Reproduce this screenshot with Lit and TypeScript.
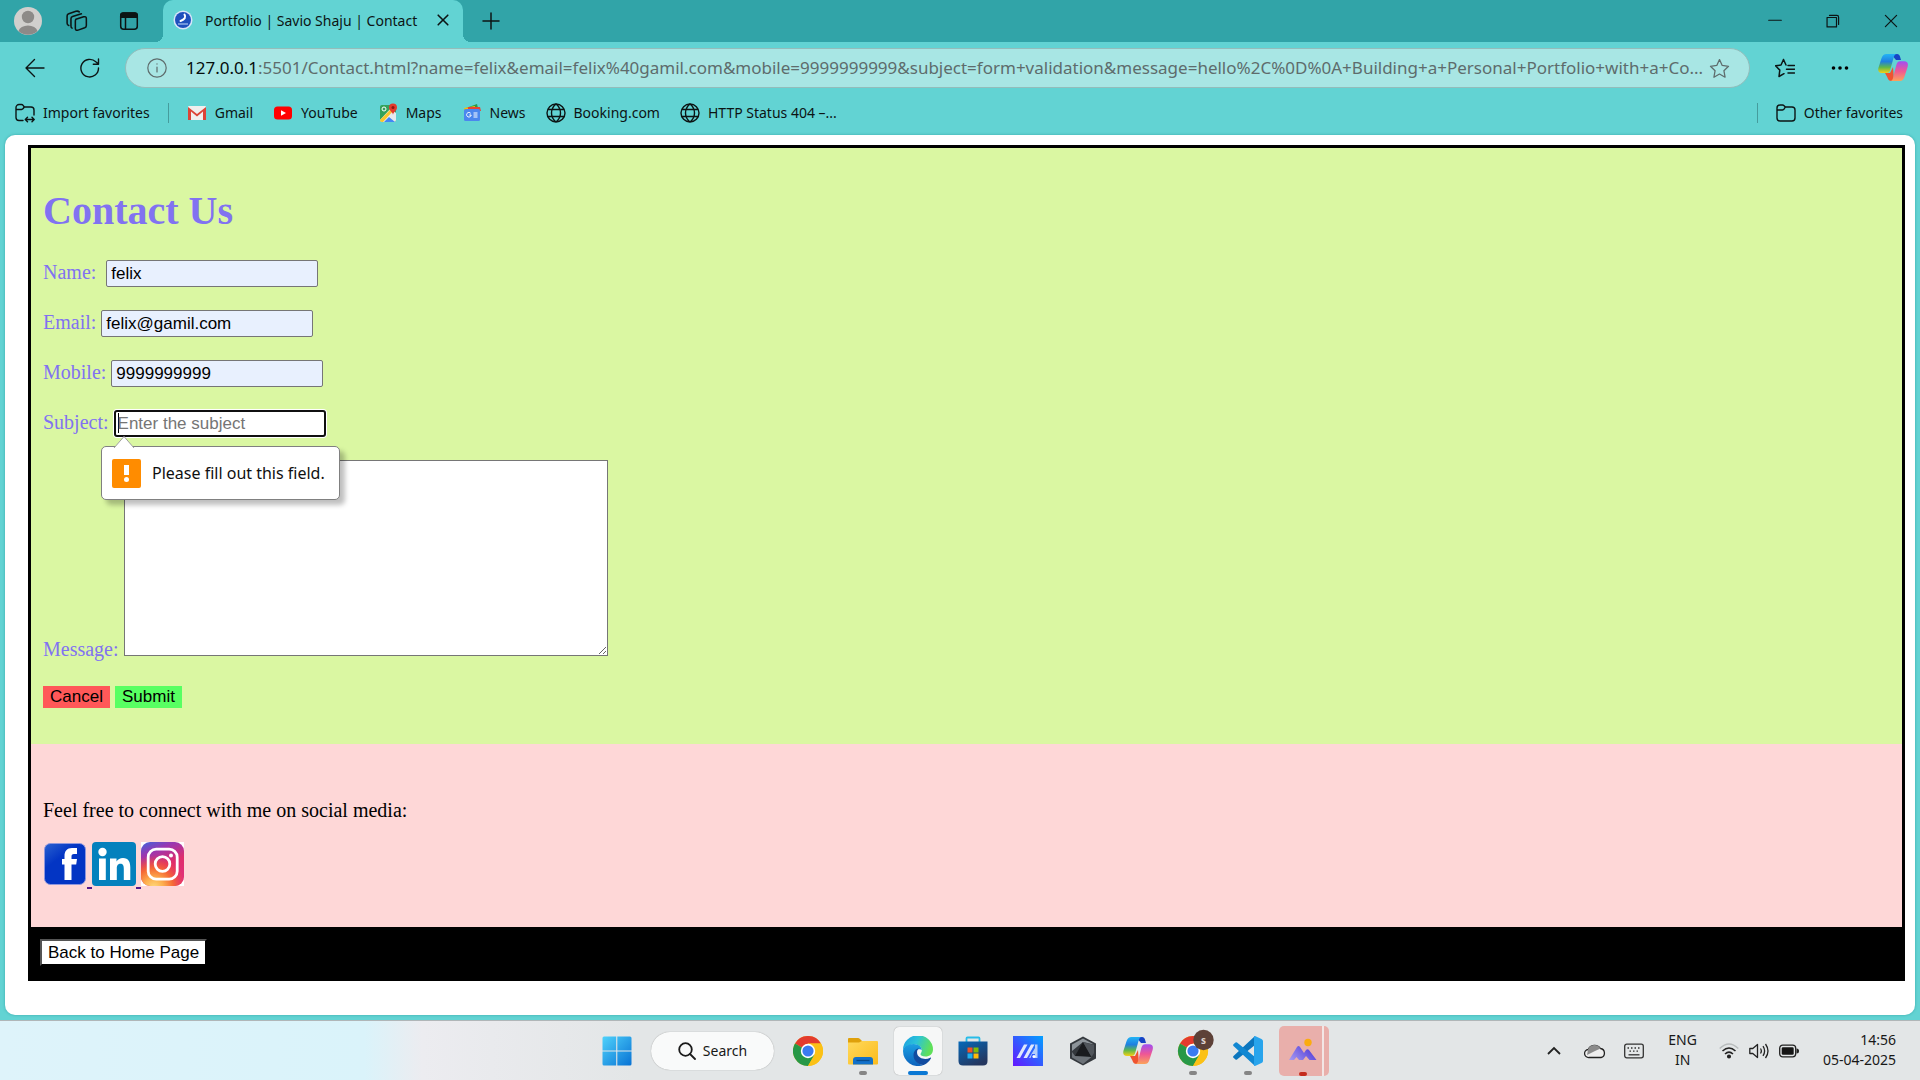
import { LitElement, html, css, svg } from "lit";
import { customElement } from "lit/decorators.js";

const stroke = (d: string, size = 20, width = 1.4) => html`
  <svg class="ico" width=${size} height=${size} viewBox="0 0 20 20" fill="none" stroke="currentColor" stroke-width=${width} stroke-linecap="round" stroke-linejoin="round" aria-hidden="true"><path d=${d}></path></svg>`;

const globe = "M10 1a9 9 0 1 0 0 18a9 9 0 1 0 0-18M10 1c-6 5-6 13 0 18M10 1c6 5 6 13 0 18M2 6.500h16M2 13.500h16";
const star = "M10 1.500l2.600 5.600 6 .8-4.400 4.200 1.100 6.200-5.300-3-5.300 3 1.100-6.200-4.400-4.200 6-.8z";
const folder = "M1 5a3 3 0 0 1 3-3h2.500q1 0 1.600.8L9.300 4H16a3 3 0 0 1 3 3v8a3 3 0 0 1-3 3H4a3 3 0 0 1-3-3zM1 7h5.500q1 0 1.500-.8L9.300 4";

const chrome = svg`
  <circle cx="15" cy="15" r="15" fill="#fbc116"></circle>
  <path d="M15 15L2 7.500A15 15 0 0 1 28 7.500H15z" fill="#e33b2e"></path>
  <path d="M2 7.500A15 15 0 0 0 15 30l6.500-11.200L15 15z" fill="#279847"></path>
  <path d="M15 7.500h13A15 15 0 0 1 15 30l6.500-11.200z" fill="#fbc116"></path>
  <circle cx="15" cy="15" r="7.200" fill="#fff"></circle><circle cx="15" cy="15" r="5.600" fill="#3a7bf0"></circle>`;

const copilot = (id: string) => html`
  <svg width="30" height="30" viewBox="0 0 30 30" aria-hidden="true">
    <defs>
      <linearGradient id="${id}a" x1="0" y1="0" x2="0" y2="1"><stop offset="0" stop-color="#22b4f5"></stop><stop offset=".4" stop-color="#1f7fe0"></stop><stop offset=".7" stop-color="#5fb84a"></stop><stop offset="1" stop-color="#f6d013"></stop></linearGradient>
      <linearGradient id="${id}b" x1="0" y1="0" x2="0" y2="1"><stop offset="0" stop-color="#a04ef2"></stop><stop offset=".5" stop-color="#ef5795"></stop><stop offset="1" stop-color="#fba35a"></stop></linearGradient>
    </defs>
    <path d="M13 1h6c2 0 2.700 1.400 3.300 3.500L23 7h-5z" fill="#1743c5"></path>
    <path d="M7 20h5l3-6 1 14h-2.500c-2.500 0-3.500-1.500-4.200-3.800z" fill="#ef5430"></path>
    <path d="M8.500 1H19c-2 0-2.800 1.500-3.500 4l-3.200 11.500c-.7 2.500-1.500 3.500-4 3.500H4c-3.500 0-4.400-2.500-3.400-5.700l3-9.300C4.600 2.500 6 1 8.500 1z" fill="url(#${id}a)"></path>
    <path d="M21.700 28H12c2 0 2.700-1.500 3.300-4l3-12c.7-2.500 1.600-3.800 4-3.800h3.900c3.400 0 4.300 2.500 3.400 5.700l-3 9.300c-1 3.300-2.300 4.800-4.900 4.800z" fill="url(#${id}b)"></path>
  </svg>`;

@customElement("edge-chrome")
class EdgeChrome extends LitElement {
  static styles = css`
    :host { display: block; font-family: "Noto Sans", "Open Sans", sans-serif; font-size: 14px; color: #0c1414; }
    button, input { font: inherit; color: inherit; background: none; border: 0; padding: 0; margin: 0; }
    button { display: flex; align-items: center; justify-content: center; }
    svg { display: block; flex: none; }
    a { color: inherit; text-decoration: none; display: flex; align-items: center; gap: 8px; white-space: nowrap; }
    .tabs { display: flex; height: 42px; background: #31a4a8; align-items: stretch; }
    .lead { display: flex; align-items: center; gap: 24px; padding: 0 24px 0 14px; }
    .spaces { padding-right: 7px; }
    .tab { position: relative; display: flex; align-items: center; width: 300px; box-sizing: border-box; padding: 0 12px 2px 10px; background: #62d3d3; border-radius: 10px 10px 0 0; }
    .tab::before, .tab::after { content: ""; position: absolute; bottom: 0; width: 8px; height: 8px; }
    .tab::before { left: -8px; background: radial-gradient(circle at 0 0, #31a4a8 8px, #62d3d3 8px); }
    .tab::after { right: -8px; background: radial-gradient(circle at 100% 0, #31a4a8 8px, #62d3d3 8px); }
    .title { flex: 1; margin-left: 12px; white-space: nowrap; }
    .plus { margin-left: 18px; }
    .window { margin-left: auto; display: flex; }
    .window button { width: 58px; }
    .bar { display: flex; align-items: center; height: 50px; padding: 2px 12px 0 25px; box-sizing: border-box; background: #62d3d3; gap: 35px; }
    .menu { margin-right: -7px; }
    .address { flex: 1; min-width: 0; display: flex; align-items: center; height: 40px; box-sizing: border-box; border: 1px solid #93bdbb; border-radius: 20px; background: #a8e6e4; padding: 0 19px 0 21px; margin-left: -10px; margin-right: -10px; color: #5e6c6c; }
    .url { flex: 1; min-width: 0; white-space: nowrap; font-size: 17px; margin: 0 2px 0 19px; padding-bottom: 2px; }
    .url b { font-weight: 400; color: #050d0d; }
    .favs { display: flex; align-items: center; height: 43px; box-sizing: border-box; padding: 0 17px 2px 15px; background: #62d3d3; gap: 20px; }
    .sep { width: 1px; height: 20px; background: #459c9d; }
    .first { margin: 0 -2px; }
    .other { margin-left: auto; display: flex; align-items: center; gap: 18px; }
  `;
  render() {
    return html`
      <div class="tabs">
        <div class="lead">
          <button aria-label="Profile"><svg width="28" height="28" viewBox="0 0 28 28"><circle cx="14" cy="14" r="14" fill="#d1cfcd"></circle><circle cx="14" cy="10" r="6.200" fill="#8d8a88"></circle><path d="M4.500 24a9.700 7 0 0 1 19 0A14 14 0 0 1 4.500 24z" fill="#8d8a88"></path></svg></button>
          <button class="spaces" aria-label="Workspaces">${stroke("M9 8.500l7-2.300q2.500-.6 2.500 1.600V14q0 1.600-1.500 2.200l-6 2.100q-2.500.7-2.500-1.700v-6.500q0-1.200.5-1.600M5.500 16.500Q4.500 16 4.500 14.500V8q0-1.600 1.500-2.100L14 3.500M2.500 14Q1 13.500 1 12V5.500Q1 4 2.500 3.500L9 1.200q2-.5 3 .5", 22)}</button>
          <button aria-label="Tab actions"><svg class="ico" width="20" height="20" viewBox="0 0 20 20"><rect x="1.700" y="2" width="16.600" height="16.300" rx="3" fill="none" stroke="currentColor" stroke-width="1.500"></rect><path d="M1 7V4.500A3.200 3.200 0 0 1 4.200 1.300h11.600A3.200 3.200 0 0 1 19 4.500V7z" fill="currentColor"></path><path d="M6.500 7v11" stroke="currentColor" stroke-width="1.500"></path></svg></button>
        </div>
        <div class="tab">
          <svg width="20" height="20" viewBox="0 0 20 20"><circle cx="10" cy="10" r="9.500" fill="#d8e6fa"></circle><circle cx="10" cy="10" r="8" fill="#1f50bd"></circle><path d="M11.500 4.500q2.500 4-4 6.500" stroke="#fff" stroke-width="2" fill="none" stroke-linecap="round"></path><path d="M5 14h10" stroke="#a9c3ef" stroke-width="1.200"></path></svg>
          <span class="title">Portfolio | Savio Shaju | Contact</span>
          <button aria-label="Close tab">${stroke("M4 4l12 12M16 4L4 16", 16, 2)}</button>
        </div>
        <button class="plus" aria-label="New tab">${stroke("M10 2v16M2 10h16", 20, 1.500)}</button>
        <div class="window">
          <button aria-label="Minimise">${stroke("M1 9h18", 14, 1.600)}</button>
          <button aria-label="Restore">${stroke("M1.500 5h13.500v13.500H1.500zM5 2h10.500q2.500 0 2.500 2.500V15", 14, 1.700)}</button>
          <button aria-label="Close">${stroke("M2 2l16 16M18 2L2 18", 14, 1.700)}</button>
        </div>
      </div>
      <div class="bar">
        <button aria-label="Back">${stroke("M19 10H1M9.500 1.500L1 10l8.500 8.500", 20)}</button>
        <button aria-label="Refresh">${stroke("M18.500 10a8.800 8.800 0 1 1-2.700-6.200L18.500 6M18.500 1v5.200h-5.200", 20)}</button>
        <div class="address">
          ${stroke("M10 .8a9.200 9.200 0 1 0 0 18.400a9.200 9.200 0 1 0 0-18.400M10 9v5M10 5.800v.3", 20, 1.200)}
          <span class="url"><b>127.0.0.1</b>:5501/Contact.html?name=felix&amp;email=felix%40gamil.com&amp;mobile=9999999999&amp;subject=form+validation&amp;message=hello%2C%0D%0A+Building+a+Personal+Portfolio+with+a+Co...</span>
          <button aria-label="Add to favorites">${stroke(star, 21, 1.200)}</button>
        </div>
        <button aria-label="Favorites">${stroke("M8.500 1.500L6 7l-5.500.8 4.300 4.300L4 18.500l5-2.800M8.500 1.500L11 7M13 7.500h6.500M11.500 11.200h8M13 15h6.500", 20, 1.500)}</button>
        <button class="menu" aria-label="Settings and more"><svg width="20" height="20" viewBox="0 0 20 20"><circle cx="3.500" cy="10" r="1.800"></circle><circle cx="10" cy="10" r="1.800"></circle><circle cx="16.500" cy="10" r="1.800"></circle></svg></button>
        <button aria-label="Copilot">${copilot("t")}</button>
      </div>
      <div class="favs">
        <a href="#">${stroke("M8 17.500H4a3 3 0 0 1-3-3V4.500a3 3 0 0 1 3-3h2.500q1 0 1.600.8L9.300 4H16a3 3 0 0 1 3 3v5M1 6.500h5.500q1 0 1.500-.8L9.300 4M10.500 16.500h8.500M12.500 14.300l-2.200 2.200 2.200 2.200M17 14.300l2.200 2.200-2.200 2.200", 20)}Import favorites</a>
        <span class="sep first"></span>
        <a href="#"><svg width="20" height="20" viewBox="0 0 20 20"><rect x="1" y="3" width="18" height="14" rx="1" fill="#f0efee"></rect><path d="M1 17V4l9 7 9-7v13h-3V8.500l-6 5-6-5V17z" fill="#dc4437"></path></svg>Gmail</a>
        <a href="#"><svg width="20" height="20" viewBox="0 0 20 20"><rect x="1" y="3.500" width="18" height="13" rx="3.500" fill="#f00"></rect><path d="M8 7.200v5.600l5-2.800z" fill="#fff"></path></svg>YouTube</a>
        <a href="#"><svg width="20" height="20" viewBox="0 0 20 20"><rect x="2" y="2" width="16" height="17" rx="2" fill="#34a25a"></rect><path d="M2 17L13 5l5 5v7q0 2-2 2H4q-2 0-2-2z" fill="#e8eaed"></path><path d="M2 17L14 5l2 2L5 19H4q-2 0-2-2z" fill="#fbc52a"></path><path d="M6 19l5-5 6 5z" fill="#4287f5"></path><circle cx="6" cy="6" r="2" fill="none" stroke="#fff"></circle><path d="M15 12c0-3-4-4-4-7.500a4 4 0 0 1 8 0C19 8 15 9 15 12z" fill="#e33b2e"></path><circle cx="15" cy="4.500" r="1.500" fill="#8c1a13"></circle></svg>Maps</a>
        <a href="#"><svg width="20" height="20" viewBox="0 0 20 20"><path d="M4 5l11-4 2 8H5z" fill="#2b9a4b"></path><path d="M2 5l11-2v6H3z" fill="#fbbc05"></path><path d="M6 4h12l1 4H6z" fill="#e94335"></path><rect x="2" y="6" width="16" height="12" rx="1.500" fill="#4b87ee"></rect><path d="M8.700 10.300A2.300 2.300 0 1 0 9.200 12H7.300M11.500 10h4M11.500 12h4M11.500 14h4" stroke="#fff" fill="none"></path></svg>News</a>
        <a href="#">${stroke(globe)}Booking.com</a>
        <a href="#">${stroke(globe)}HTTP Status 404 –...</a>
        <div class="other"><span class="sep"></span><a href="#">${stroke(folder)}Other favorites</a></div>
      </div>`;
  }
}

@customElement("contact-page")
class ContactPage extends LitElement {
  static styles = css`
    :host { display: flex; flex-direction: column; flex: 1; background: #62d3d3; padding: 0 5px 5px; font-family: "Liberation Serif", serif; font-size: 20px; line-height: 23px; }
    .view { flex: 1; background: #fff; border-radius: 10px; padding: 10px 10px 34px 23px; box-shadow: 0 0 3px #3aa9aa; }
    .frame { border: 3px solid #000; background: #000; }
    .form { background: #daf7a2; padding: 40px 12px 36px; color: #8172f1; }
    h1 { margin: 0 0 26px; font-size: 40px; line-height: 46px; }
    .row { position: relative; display: flex; align-items: baseline; gap: 5px; margin-bottom: 23px; }
    .message { margin-bottom: 25px; }
    label { white-space: pre; }
    input, textarea, button { font-family: "Liberation Sans", sans-serif; font-size: 17px; line-height: 20px; color: #000; box-sizing: border-box; margin: 0; }
    input { width: 212px; height: 27px; padding: 1px 4px; border: 1px solid #767676; border-radius: 2px; background: #e8f0fe; outline: 0; }
    .invalid { background: linear-gradient(#000, #000) 2px 1px / 1px 20px no-repeat #fff; border: 2px solid #101010; padding: 0 2px; border-radius: 3px; box-shadow: 0 0 0 1px #fff; }
    .invalid::placeholder { color: #757575; opacity: 1; }
    textarea { width: 484px; height: 196px; border: 1px solid #767676; background: #fff; padding: 2px; }
    .tip { position: absolute; z-index: 1; left: 58px; top: 36px; display: flex; align-items: center; gap: 11px; box-sizing: border-box; height: 54px; padding: 0 14px 0 10px; border: 1px solid #808080; border-radius: 5px; background: #fff; box-shadow: 5px 5px 5px rgba(0, 0, 0, .25); color: #101010; font-family: "Noto Sans", sans-serif; font-size: 16px; white-space: nowrap; }
    .arrow { position: absolute; left: 11px; top: -12px; }
    .actions { display: flex; gap: 5px; }
    .actions button { border: 0; width: 67px; height: 22px; padding: 0; }
    .cancel { background: #ff5858; }
    .submit { background: #58ff62; }
    .social { background: #fed7d7; padding: 55px 12px 38px; color: #000; }
    p { margin: 0 0 20px; }
    .links a { color: #551a8b; }
    .links svg { vertical-align: baseline; }
    .links { line-height: 20px; }
    .foot { padding: 12px 9px; background: #000; }
    .foot button { display: block; background: #fff; border: 2px outset #000; padding: 2px 6px; height: 27px; }
  `;
  render() {
    return html`
      <div class="view"><div class="frame">
        <form class="form" novalidate>
          <h1>Contact Us</h1>
          <div class="row"><label for="name">Name:&nbsp;</label><input id="name" value="felix"></div>
          <div class="row"><label for="email">Email:</label><input id="email" type="email" value="felix@gamil.com"></div>
          <div class="row"><label for="mobile">Mobile:</label><input id="mobile" type="tel" value="9999999999"></div>
          <div class="row"><label for="subject">Subject:</label><input class="invalid" id="subject" placeholder="Enter the subject">
            <div class="tip" role="alert">
              <svg class="arrow" width="22" height="13" viewBox="0 0 22 13"><path d="M1 13L11 1.500L21 13" fill="#fff" stroke="#a0a0a0"></path></svg>
              <svg width="29" height="29" viewBox="0 0 29 29"><rect width="29" height="29" rx="2" fill="#ff8c00"></rect><path d="M12 6h5v10h-5z" fill="#fff"></path><circle cx="14.500" cy="20.500" r="2.500" fill="#fff"></circle></svg>
              <span>Please fill out this field.</span>
            </div>
          </div>
          <div class="message"><label for="message">Message:</label> <textarea id="message"></textarea></div>
          <div class="actions"><button class="cancel" type="reset">Cancel</button><button class="submit" type="submit">Submit</button></div>
        </form>
        <section class="social">
          <p>Feel free to connect with me on social media:</p>
          <div class="links"><a href="#" aria-label="Facebook"><svg width="44" height="44" viewBox="0 0 44 44"><defs><linearGradient id="fb" x1="0" y1="0" x2=".3" y2=".4"><stop offset="0" stop-color="#2a62d0"></stop><stop offset="1" stop-color="#0335c4"></stop></linearGradient></defs><rect x="1.500" y="1.500" width="41" height="41" rx="6" fill="url(#fb)" stroke="#8f97dc"></rect><path d="M21.500 38V22.500H19v-5.500h2.500v-3c0-5 2.500-8 7.500-8h5v6h-3c-2 0-2.500 1-2.500 2.500V17H34l-.8 5.500h-4.700V38z" fill="#fff"></path></svg>&#32;</a><a href="#" aria-label="LinkedIn"><svg width="44" height="44" viewBox="0 0 44 44"><rect width="44" height="44" rx="4" fill="#0481bd"></rect><circle cx="10.500" cy="10" r="4.200" fill="#fff"></circle><path d="M7 16.500h6.800V38H7zM18 16.500h6.500v3q2-3.500 6.500-3.500c5.500 0 7.300 4 7.300 9.500V38h-6.500V27c0-3-.6-5.200-3.300-5.200-3 0-3.700 2.200-3.700 5V38H18z" fill="#fff"></path></svg>&#32;</a><a href="#" aria-label="Instagram"><svg width="44" height="44" viewBox="0 0 44 44"><defs><linearGradient id="ig" x1=".1" y1="0" x2=".5" y2="1"><stop offset="0" stop-color="#4a60d8"></stop><stop offset=".25" stop-color="#9b36b0"></stop><stop offset=".6" stop-color="#df2d6c"></stop><stop offset="1" stop-color="#e0307a"></stop></linearGradient><radialGradient id="ig2" cx=".3" cy="1.050" r=".75"><stop offset="0" stop-color="#ffdc80"></stop><stop offset=".3" stop-color="#fdb04e"></stop><stop offset=".6" stop-color="#f56a35"></stop><stop offset="1" stop-color="#f5453a" stop-opacity="0"></stop></radialGradient></defs><path fill="#fff" d="M0 0h43v44H0z"></path><rect width="43" height="44" rx="9" fill="url(#ig)"></rect><rect width="43" height="44" rx="9" fill="url(#ig2)"></rect><rect x="7.200" y="7.200" width="29" height="30" rx="8" fill="none" stroke="#fff" stroke-width="2.800"></rect><circle cx="21.500" cy="22" r="7.300" fill="none" stroke="#fff" stroke-width="2.800"></circle><circle cx="30" cy="13.500" r="2" fill="#fff"></circle></svg></a></div>
        </section>
        <div class="foot"><button type="button">Back to Home Page</button></div>
      </div></div>`;
  }
}

@customElement("task-bar")
class TaskBar extends LitElement {
  static styles = css`
    :host { display: grid; grid-template-columns: 1fr auto 1fr; align-items: center; height: 60px; box-sizing: border-box; border-top: 1px solid #b0b6b8; background: linear-gradient(90deg, #def3fa 0, #daf3fa 19%, #ececf0 22%, #e3e6e7 33%, #e3e6e7 100%); font-family: "Noto Sans", "Open Sans", sans-serif; font-size: 14px; line-height: 20px; color: #181818; }
    button { display: flex; align-items: center; justify-content: center; border: 0; padding: 0; background: none; font: inherit; color: inherit; }
    svg { display: block; flex: none; }
    .apps { grid-column: 2; display: flex; align-items: center; gap: 7px; padding-left: 2px; }
    .app { position: relative; width: 48px; height: 48px; border-radius: 5px; }
    .app::after { content: ""; position: absolute; bottom: 0; left: 20px; width: 8px; height: 4px; border-radius: 2px; }
    .open::after { background: #858585; }
    .active { background: #f6f7f7; box-shadow: 0 0 1px #888; }
    .active::after { left: 14px; width: 20px; background: #0a78d4; }
    .alert { width: 50px; height: 50px; padding-right: 2px; background: linear-gradient(90deg, #e9afab 43px, #f3e6e5 43px, #f3e6e5 45px, #e9afab 45px); }
    .alert::after { background: #c42b1c; }
    .search { width: 123px; height: 38px; border-radius: 19px; background: #f9fafa; box-shadow: 0 0 1px #888; gap: 7px; margin: 0 3px; }
    .tray { grid-column: 3; justify-self: end; display: flex; align-items: center; padding-right: 24px; }
    .lang { text-align: center; margin: 0 22px 0 24px; }
    .clock { text-align: right; margin-left: 24px; display: block; }
    .lang, .clock { padding-bottom: 2px; }
    .trio { gap: 10px; }
    .mid { margin: 0 18px 0 22px; }
  `;
  render() {
    return html`
      <div class="apps">
        <button class="app" aria-label="Start"><svg width="30" height="30" viewBox="0 0 30 30"><defs><linearGradient id="w" x1="0" y1="0" x2="1" y2="1"><stop offset="0" stop-color="#4fd2fb"></stop><stop offset="1" stop-color="#0872d4"></stop></linearGradient></defs><path d="M2 .5h12.200v14H.5V2Q.5.5 2 .5M15.300.5H28q1.500 0 1.500 1.500v12.500H15.300zM.5 15.600h13.700v13.900H2q-1.500 0-1.500-1.500zM15.300 15.600h14.200V28q0 1.500-1.500 1.500H15.300z" fill="url(#w)"></path></svg></button>
        <button class="search"><svg width="18" height="18" viewBox="0 0 18 18" fill="none" stroke="#1b1b1b" stroke-width="1.800" stroke-linecap="round"><circle cx="7.500" cy="7.500" r="6.300"></circle><path d="M12 12l5 5"></path></svg>Search</button>
        <button class="app" aria-label="Chrome"><svg width="30" height="30" viewBox="0 0 30 30">${chrome}</svg></button>
        <button class="app open" aria-label="File Explorer"><svg width="30" height="30" viewBox="0 0 30 30"><defs><linearGradient id="f" x1="0" y1="0" x2="1" y2="1"><stop offset="0" stop-color="#ffd95c"></stop><stop offset="1" stop-color="#fbbb1c"></stop></linearGradient></defs><path d="M0 3q0-1 1-1h9q1 0 2 1l2 2v5H0z" fill="#dfa00b"></path><path d="M0 6.500h11l3-1.500h15q1 0 1 1v21.500q0 1-1 1H1q-1 0-1-1z" fill="url(#f)"></path><path d="M5 28.500V24q0-3 3-3h14q3 0 3 3v4.500z" fill="#1271ca"></path><path d="M8.500 24.500h13" stroke="#084b8c" stroke-width="1.300"></path></svg></button>
        <button class="app active" aria-label="Edge"><svg width="30" height="30" viewBox="0 0 30 30"><defs><linearGradient id="e" x1="0" y1="0" x2="1" y2=".3"><stop offset="0" stop-color="#1b9de2"></stop><stop offset=".5" stop-color="#2cc3d8"></stop><stop offset="1" stop-color="#5fe05a"></stop></linearGradient><linearGradient id="e2" x1="0" y1="0" x2="0" y2="1"><stop offset="0" stop-color="#1ca0e2"></stop><stop offset="1" stop-color="#0c62bd"></stop></linearGradient></defs><path d="M0 14A15 14.500 0 0 1 30 13.500c0 4.500-3.500 7-7.500 7-3.500 0-5-1.200-5-2.200s1.300-1.600 1.300-4C18.800 11 16 8.500 11.500 8.500 5.500 8.500 1 11 0 14z" fill="url(#e)"></path><path d="M0 15C0 11 5 8 10.500 8c5 0 8.300 2.800 8.300 6-1.500-1.800-7.300-1-7.300 5 0 5.500 4 9.500 9 10A15 15 0 0 1 0 15z" fill="url(#e2)"></path><path d="M16 12.300c-3 .2-5.500 3.200-5.500 7 0 5.500 5 10 10.200 9.600 3.500-1.500 6-4 7.300-6.700.2-.6-.3-.8-.8-.5-5 2.600-11.700.8-13-4-.6-2.300.3-4.300 1.800-5.400z" fill="#124ca0"></path></svg></button>
        <button class="app" aria-label="Microsoft Store"><svg width="30" height="30" viewBox="0 0 30 30"><defs><linearGradient id="s" x1="0" y1="0" x2=".6" y2="1"><stop offset="0" stop-color="#0669b9"></stop><stop offset="1" stop-color="#24365f"></stop></linearGradient></defs><path d="M8.500 6V2.500q0-1 1-1h11q1 0 1 1V6" fill="none" stroke="#28bce8" stroke-width="1.800"></path><path d="M.5 5.500h29V25q0 4.500-4.500 4.500H5Q.5 29.500.5 25z" fill="url(#s)"></path><path d="M9.500 11.500h5v5h-5z" fill="#f35325"></path><path d="M15.500 11.500h5v5h-5z" fill="#81bc06"></path><path d="M9.500 17.500h5v5h-5z" fill="#1fb0ee"></path><path d="M15.500 17.500h5v5h-5z" fill="#ffba08"></path></svg></button>
        <button class="app" aria-label="MyASUS"><svg width="30" height="30" viewBox="0 0 30 30"><defs><linearGradient id="m" x1="0" y1="1" x2="1" y2="0"><stop offset="0" stop-color="#6516ff"></stop><stop offset="1" stop-color="#02a0ff"></stop></linearGradient></defs><path d="M0 0h30v30H0z" fill="url(#m)"></path><path d="M3.500 22L11 8.500h3.500L7 22zM10.500 22L18 8.500h3.500L14 22z" fill="#dfe7fd"></path><path d="M16 22l6-10V8.500h2.500V22H22v-4h-3l-1.500 4z" fill="#b4cdfc"></path><circle cx="21" cy="20.500" r="1.600" fill="#fff"></circle></svg></button>
        <button class="app" aria-label="Armoury Crate"><svg width="30" height="30" viewBox="0 0 30 30"><path d="M15 .5l13 7v15l-13 7-13-7v-15z" fill="#34383d"></path><path d="M15 2.500L26 8.500 15 6 4 15V8.500z" fill="#8d949a"></path><path d="M15 6l8.500 15L7 20z" fill="#191b1e"></path><path d="M4 16l3 4 16.500 1-8.500 7L4 21.500z" fill="#6c7278"></path><path d="M15 6l11 3v8l-2.500 4z" fill="#50555b"></path></svg></button>
        <button class="app" aria-label="Copilot">${copilot("k")}</button>
        <button class="app open" aria-label="Chrome, S"><svg width="42" height="48" viewBox="-6 -9 42 48">${chrome}<circle cx="25.500" cy="4" r="10.200" fill="#5d4138"></circle><text x="25.500" y="8" font-size="10" font-weight="700" text-anchor="middle" fill="#ddd5d1">s</text></svg></button>
        <button class="app open" aria-label="Visual Studio Code"><svg width="30" height="30" viewBox="0 0 30 30"><path d="M22 0v9L4 23.500q-.8.700-1.500 0L.5 21.700q-.8-.8 0-1.600z" fill="#0c76be"></path><path d="M22 30v-9L4 6.500Q3.200 5.800 2.500 6.500L.5 8.300q-.8.800 0 1.600z" fill="#1187d2"></path><path d="M22 0l6.500 3Q30 3.800 30 5v20q0 1.300-1.500 2L22 30q-1 0-1-1V1q0-1 1-1z" fill="#28a4ec"></path></svg></button>
        <button class="app alert" aria-label="Photo app"><svg width="30" height="30" viewBox="0 0 30 30"><defs><linearGradient id="p" x1="0" y1="1" x2="1" y2=".5"><stop offset="0" stop-color="#a79cf2"></stop><stop offset="1" stop-color="#5540d8"></stop></linearGradient></defs><circle cx="20" cy="6.500" r="3.700" fill="#fbac0f"></circle><path d="M1 24L9 11q1.500-2 3 0l4 6 2-3q1.500-1.700 3 0l7.500 10h-7L18 20l-3 4h-4l-2.500-3L6 24z" fill="url(#p)"></path></svg></button>
      </div>
      <div class="tray">
        <button aria-label="Show hidden icons"><svg width="16" height="16" viewBox="0 0 16 16" fill="none" stroke="#222" stroke-width="1.800"><path d="M2 11l6-6 6 6"></path></svg></button>
        <button class="mid" aria-label="OneDrive"><svg width="22" height="16" viewBox="0 0 22 16"><path d="M5 14.500a4 4 0 0 1-.8-8A7 7 0 0 1 16.500 5.500 4.600 4.600 0 0 1 17 14.500z" fill="#eee" stroke="#222" stroke-width="1.300"></path><path d="M4 6.500A7 7 0 0 1 16.500 5.500L11 8 3 12z" fill="#8b8b8b"></path></svg></button>
        <button aria-label="Touch keyboard"><svg width="20" height="16" viewBox="0 0 20 16" fill="none" stroke="#333" stroke-width="1.300"><rect x=".7" y="1.200" width="18.600" height="13.600" rx="2"></rect><path d="M3.500 5h13" stroke-dasharray="1.500 2"></path><path d="M5.500 8.200h10" stroke-dasharray="1.500 2"></path><path d="M4.500 11.800h11"></path></svg></button>
        <button class="lang">ENG<br>IN</button>
        <button class="trio" aria-label="Network, volume and battery">
          <svg width="20" height="18" viewBox="0 0 20 18" fill="none" stroke="#222" stroke-width="1.500"><path d="M.7 6.500Q10-2.500 19.300 6.500" stroke="#b8bcbd"></path><path d="M3.500 9q6.500-6 13 0M6 12q4-3.700 8 0"></path><circle cx="10" cy="14.500" r="1.300" fill="#222"></circle></svg>
          <svg width="20" height="18" viewBox="0 0 20 18" fill="none" stroke="#222" stroke-width="1.300" stroke-linejoin="round"><path d="M.8 6.500h3L8.500 2.500v13l-4.700-4h-3zM11.500 6.500q1.700 2.500 0 5M14 4.200q3.200 4.800 0 9.600M16.500 2q5 7 0 14"></path></svg>
          <svg width="20" height="14" viewBox="0 0 20 14"><rect x=".7" y="1.200" width="16" height="11.600" rx="3" fill="none" stroke="#222" stroke-width="1.300"></rect><rect x="2.700" y="3.200" width="12" height="7.600" rx="1.300" fill="#151515"></rect><path d="M17.500 4.500q2.500 0 2.500 2.500t-2.500 2.500z" fill="#222"></path></svg>
        </button>
        <button class="clock">14:56<br>05-04-2025</button>
      </div>`;
  }
}

@customElement("app-root")
class AppRoot extends LitElement {
  static styles = css`:host { display: flex; flex-direction: column; min-height: 100vh; }`;
  render() {
    return html`<edge-chrome></edge-chrome><contact-page></contact-page><task-bar></task-bar>`;
  }
}
